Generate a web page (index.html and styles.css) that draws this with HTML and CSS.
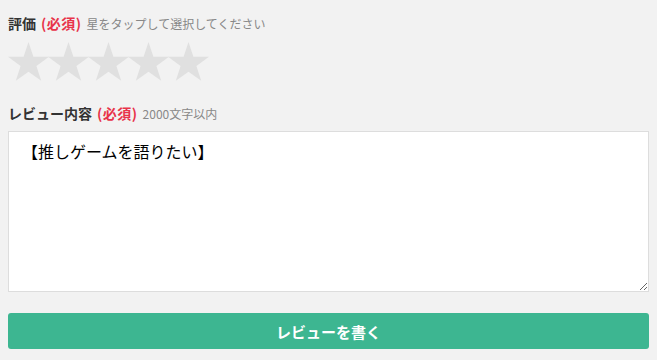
FILE: index.html
```html
<!DOCTYPE html>
<html lang="ja">
<head>
<meta charset="utf-8">
<title>レビュー</title>
<link rel="stylesheet" href="styles.css">
</head>
<body>
<form class="review-form">
  <div class="field-label">
    <span class="label-main">評価</span>
    <span class="label-required">(必須)</span>
    <span class="label-hint">星をタップして選択してください</span>
  </div>
  <div class="stars">
    <svg class="star" viewBox="0 0 40 40" width="40" height="40"><polygon points="20.5,0 25.4,14.8 41,14.8 28.4,24 33.2,38.8 20.5,29.7 7.8,38.8 12.6,24 0,14.8 15.6,14.8"/></svg>
    <svg class="star" viewBox="0 0 40 40" width="40" height="40"><polygon points="20.5,0 25.4,14.8 41,14.8 28.4,24 33.2,38.8 20.5,29.7 7.8,38.8 12.6,24 0,14.8 15.6,14.8"/></svg>
    <svg class="star" viewBox="0 0 40 40" width="40" height="40"><polygon points="20.5,0 25.4,14.8 41,14.8 28.4,24 33.2,38.8 20.5,29.7 7.8,38.8 12.6,24 0,14.8 15.6,14.8"/></svg>
    <svg class="star" viewBox="0 0 40 40" width="40" height="40"><polygon points="20.5,0 25.4,14.8 41,14.8 28.4,24 33.2,38.8 20.5,29.7 7.8,38.8 12.6,24 0,14.8 15.6,14.8"/></svg>
    <svg class="star" viewBox="0 0 40 40" width="40" height="40"><polygon points="20.5,0 25.4,14.8 41,14.8 28.4,24 33.2,38.8 20.5,29.7 7.8,38.8 12.6,24 0,14.8 15.6,14.8"/></svg>
  </div>
  <div class="field-label second">
    <span class="label-main">レビュー内容</span>
    <span class="label-required">(必須)</span>
    <span class="label-hint">2000文字以内</span>
  </div>
  <textarea class="review-text">【推しゲームを語りたい】</textarea>
  <button type="button" class="submit-btn">レビューを書く</button>
</form>
</body>
</html>
```

FILE: styles.css
```css
html, body {
  margin: 0;
  padding: 0;
  background: #f2f2f2;
}
body {
  font-family: "Noto Sans CJK JP", "Noto Sans", sans-serif;
  color: #333;
}
.review-form {
  padding: 12px 8px 0 8px;
  display: flex;
  flex-direction: column;
}
.field-label {
  height: 22px;
  line-height: 22px;
  display: flex;
  align-items: baseline;
  gap: 5px;
}
.field-label.second {
  margin-top: 18px;
}
.label-main {
  font-size: 14px;
  font-weight: bold;
  color: #333;
}
.label-required {
  font-size: 14px;
  font-weight: bold;
  color: #e8334a;
  letter-spacing: 0.5px;
}
.label-hint {
  font-size: 12px;
  color: #888;
}
.stars {
  display: flex;
  margin-top: 10px;
  height: 40px;
}
.star {
  display: block;
  overflow: visible;
  fill: #e0e0e0;
  margin-top: -2px;
}
.review-text {
  margin-top: 7px;
  box-sizing: border-box;
  width: 641px;
  height: 161px;
  border: 1px solid #ddd;
  background: #fff;
  padding: 7px 9px 7px 13px;
  font-family: "Noto Sans CJK JP", sans-serif;
  font-size: 16px;
  line-height: 24px;
  color: #000;
  border-radius: 0;
  outline: none;
}
.submit-btn {
  margin-top: 21px;
  width: 641px;
  height: 36px;
  border: none;
  border-radius: 3px;
  background: #3db691;
  color: #fff;
  font-family: "Noto Sans CJK JP", sans-serif;
  font-size: 15px;
  font-weight: bold;
  padding: 0;
  cursor: pointer;
}
```
